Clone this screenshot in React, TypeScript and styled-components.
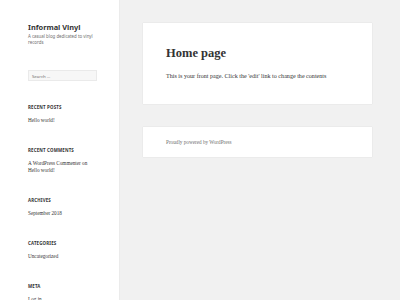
import styled, { createGlobalStyle } from "styled-components";

const GlobalStyle = createGlobalStyle`
  html, body {
    margin: 0;
    padding: 0;
    background: #f1f1f1;
  }
  * {
    box-sizing: border-box;
  }
`;

const Page = styled.div`
  display: flex;
  min-height: 300px;
  width: 400px;
  overflow: hidden;
  background: #f1f1f1;
`;

const Sidebar = styled.aside`
  width: 119px;
  flex-shrink: 0;
  min-height: 300px;
  background: #fff;
  box-shadow: 0 0 1px rgba(0, 0, 0, 0.15);
  padding: 22px 0 0 28px;
`;

const SiteTitle = styled.h1`
  margin: 0;
  font-family: "Noto Sans", sans-serif;
  font-weight: 700;
  font-size: 7.4px;
  line-height: 11px;
  color: #333;
`;

const Tagline = styled.p`
  margin: 1.3px 0 0;
  width: 72px;
  font-family: "Noto Sans", sans-serif;
  font-size: 4.4px;
  line-height: 5.7px;
  color: #707070;
`;

const SearchBox = styled.div`
  margin-top: 24.3px;
  width: 69px;
  height: 11px;
  background: #f7f7f7;
  border: 1px solid #eaeaea;
  padding: 0 3px;
  display: flex;
  align-items: center;
  font-family: "Noto Sans", sans-serif;
  font-size: 4.3px;
  color: #707070;
`;

const Widgets = styled.div`
  margin-top: 23.2px;
  display: flex;
  flex-direction: column;
  gap: 23px;
`;

const Widget = styled.section`
  display: flex;
  flex-direction: column;
`;

const WidgetTitle = styled.h2`
  margin: 0 0 7px;
  font-family: "Noto Sans", sans-serif;
  font-weight: 700;
  font-size: 4.4px;
  line-height: 6px;
  letter-spacing: 0.04em;
  text-transform: uppercase;
  color: #333;
`;

const WidgetItem = styled.div`
  font-family: "Liberation Serif", serif;
  font-size: 5.2px;
  line-height: 7px;
  color: #333;
`;

const Main = styled.main`
  flex: 1;
  padding: 22.7px 28px 0 24px;
  display: flex;
  flex-direction: column;
  gap: 23px;
`;

const Card = styled.div`
  background: #fff;
  box-shadow: 0 0 1px rgba(0, 0, 0, 0.15);
`;

const EntryCard = styled(Card)`
  padding: 23.5px 23px 25px;
`;

const EntryTitle = styled.h2`
  margin: 0 0 13px;
  font-family: "Liberation Serif", serif;
  font-weight: 700;
  font-size: 12.5px;
  line-height: 14px;
  color: #333;
`;

const EntryText = styled.p`
  margin: 0;
  font-family: "Liberation Serif", serif;
  font-size: 6.1px;
  line-height: 6px;
  color: #333;
`;

const FooterCard = styled(Card)`
  padding: 12px 23px;
  font-family: "Liberation Serif", serif;
  font-size: 5.2px;
  line-height: 6px;
  color: #707070;
`;

const widgets = [
  { title: "Recent Posts", items: ["Hello world!"] },
  { title: "Recent Comments", items: ["A WordPress Commenter on", "Hello world!"] },
  { title: "Archives", items: ["September 2018"] },
  { title: "Categories", items: ["Uncategorized"] },
  { title: "Meta", items: ["Log in"] },
];

export default function App() {
  return (
    <>
      <GlobalStyle />
      <Page>
        <Sidebar>
          <SiteTitle>Informal Vinyl</SiteTitle>
          <Tagline>A casual blog dedicated to vinyl records</Tagline>
          <SearchBox>Search …</SearchBox>
          <Widgets>
            {widgets.map((w) => (
              <Widget key={w.title}>
                <WidgetTitle>{w.title}</WidgetTitle>
                {w.items.map((item, i) => (
                  <WidgetItem key={i}>{item}</WidgetItem>
                ))}
              </Widget>
            ))}
          </Widgets>
        </Sidebar>
        <Main>
          <EntryCard>
            <EntryTitle>Home page</EntryTitle>
            <EntryText>
              This is your front page. Click the 'edit' link to change the contents
            </EntryText>
          </EntryCard>
          <FooterCard>Proudly powered by WordPress</FooterCard>
        </Main>
      </Page>
    </>
  );
}
